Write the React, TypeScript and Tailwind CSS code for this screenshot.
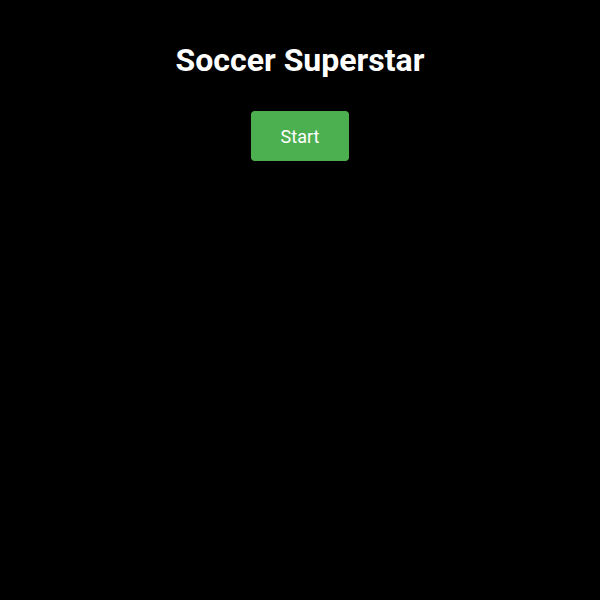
import React from 'react';

export default function App() {
    return (
        <div className="w-[600px] h-[600px] bg-black flex flex-col items-center pt-[40px] font-['Roboto',sans-serif]">
            <h1 className="text-[32px] leading-[40px] font-bold text-white">Soccer Superstar</h1>
            <button className="mt-[31px] w-[98px] h-[50px] pt-[2px] rounded bg-[#4caf50] text-white text-[18px] leading-none">
                Start
            </button>
        </div>
    );
}
